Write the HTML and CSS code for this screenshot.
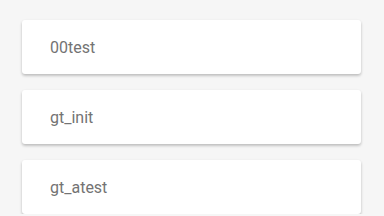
FILE: index.html
```html
<!DOCTYPE html>
<html lang="en">
<head>
  <meta charset="UTF-8">
  <title>Projects</title>
  <link rel="stylesheet" href="styles.css">
</head>
<body>

  <!-- Project list -->
  <div class="list">
    <div class="card">
      <div class="card-name">00test</div>
    </div>
    <div class="card">
      <div class="card-name">gt_init</div>
    </div>
    <div class="card">
      <div class="card-name">gt_atest</div>
    </div>
  </div>

</body>
</html>
```

FILE: styles.css
```css
    body {
      margin: 0;
      font-family: Roboto, "Liberation Sans", sans-serif;
      background-color: #f6f6f6;
      color: #737373;
    }

    .list {
      display: flex;
      flex-direction: column;
      gap: 16px;
      padding: 20px 23px 0 22px;
    }

    .card {
      background-color: #ffffff;
      height: 54px;
      padding: 0 28px;
      border-radius: 3px;
      display: flex;
      align-items: center;
      box-shadow: 0 2px 3px rgba(0, 0, 0, 0.16), 0 1px 3px rgba(0, 0, 0, 0.1);
    }

    .card-name {
      font-size: 16px;
    }
```
